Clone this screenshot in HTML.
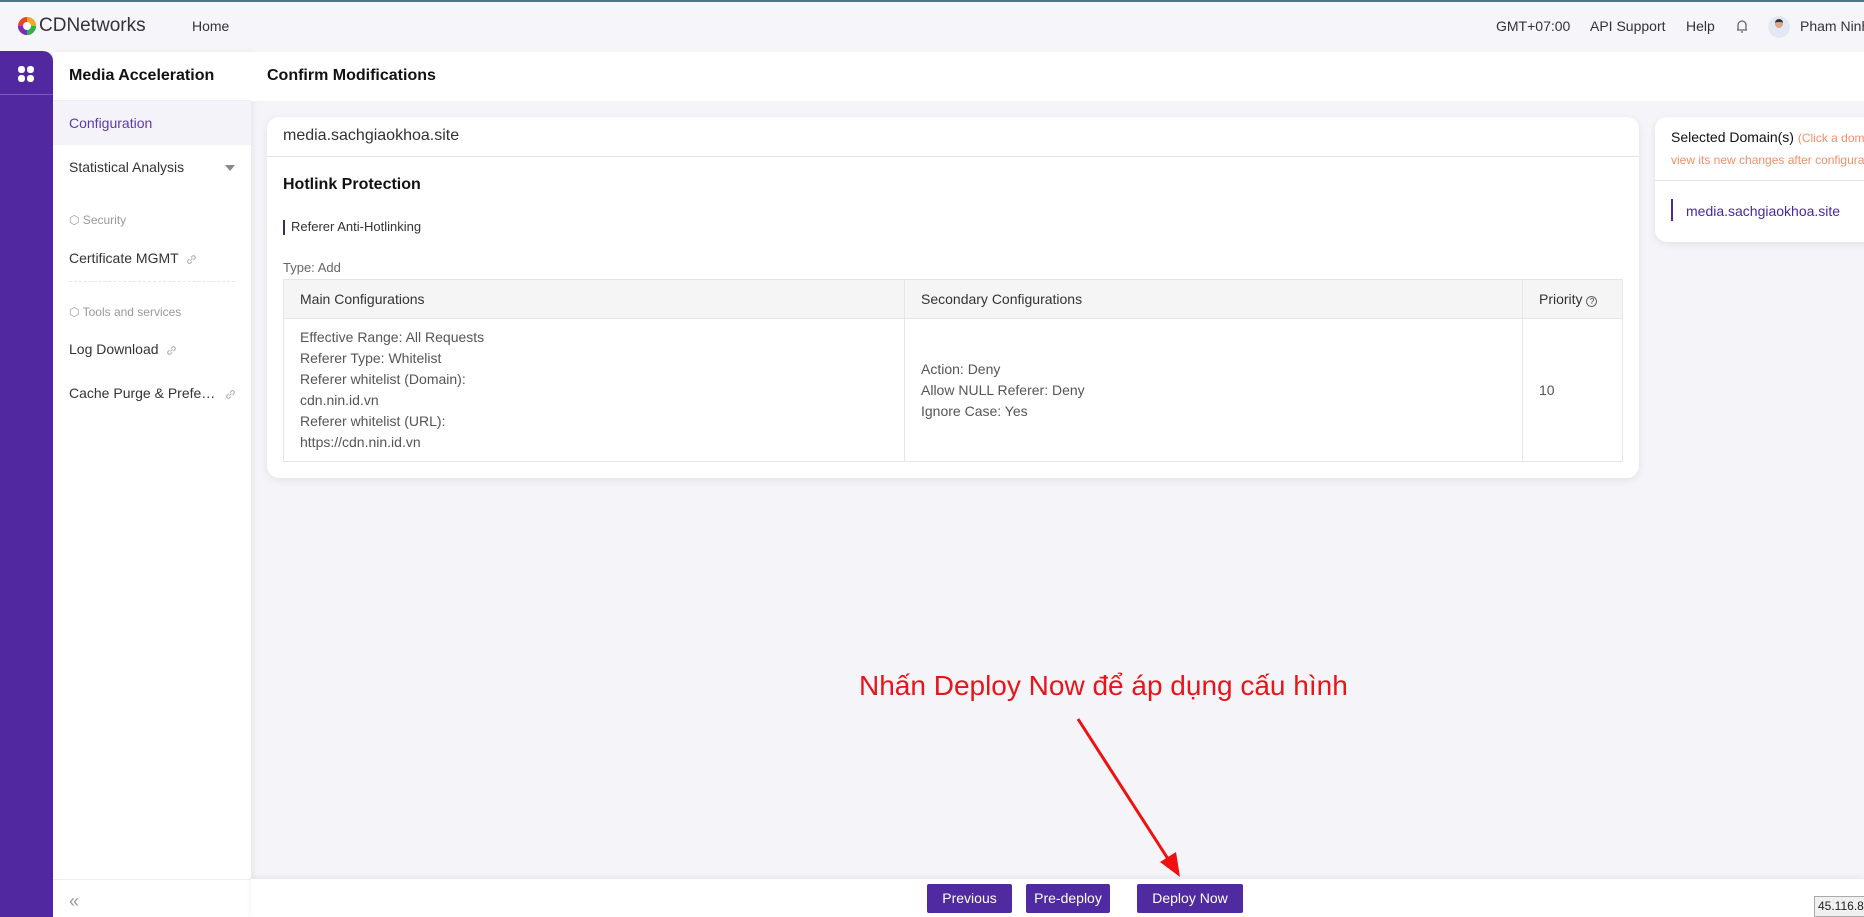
<!DOCTYPE html>
<html><head><meta charset="utf-8"><style>
*{margin:0;padding:0;box-sizing:border-box}
body{width:1864px;height:917px;overflow:hidden;background:#f5f5f9;font-family:"Liberation Sans",Arial,sans-serif;color:#333;position:relative;font-size:14px}
.abs{position:absolute;white-space:nowrap}
.hdr{left:0;top:0;width:1864px;height:52px;background:#f6f6fa;border-top:2px solid #4a7a86}
.pbar{left:0;top:51px;width:53px;height:866px;background:#5128a0;border-top-right-radius:10px}
.side{left:53px;top:52px;width:198px;height:865px;background:#fff;box-shadow:2px 0 6px rgba(0,0,0,.06)}
.mi{position:absolute;left:16px;font-size:14px;color:#333;white-space:nowrap}
.grp{position:absolute;left:16px;font-size:12px;color:#999;white-space:nowrap}
.tbar{left:251px;top:52px;width:1613px;height:49px;background:#fff}
.card{left:267px;top:117px;width:1372px;height:361px;background:#fff;border-radius:12px;box-shadow:0 2px 8px rgba(0,0,0,.08)}
.rcard{left:1655px;top:117px;width:230px;height:125px;background:#fff;border-radius:12px;box-shadow:0 2px 8px rgba(0,0,0,.08)}
table{border-collapse:collapse;position:absolute;left:16px;top:162px;width:1340px}
td,th{border:1px solid #e6e6e6;font-weight:normal;text-align:left;font-size:14px;color:#555;vertical-align:middle}
th{background:#f5f5f5;height:39px;padding-left:16px;color:#333}
td{height:143px;padding-left:16px;line-height:21px}
.btn{position:absolute;top:884px;height:29px;background:#4f2aa0;color:#fff;font-size:14px;text-align:center;line-height:29px;border-radius:2px}
.lk{display:inline-block;vertical-align:middle;margin-left:4px}
</style></head><body>
<div class="abs hdr">
 <svg class="abs" style="left:17px;top:14px" width="20" height="20" viewBox="0 0 20 20"><circle cx="10" cy="10" r="9" fill="#e8452c"/><path d="M10 1a9 9 0 0 1 9 9h-9z" fill="#f5a623"/><path d="M1 10a9 9 0 0 0 9 9v-9z" fill="#7b2cbf"/><path d="M10 19a9 9 0 0 0 9-9h-9z" fill="#2cb34a"/><circle cx="10" cy="10" r="4" fill="#fff"/></svg>
 <div class="abs" style="left:39px;top:13px;font-size:19px;color:#333">CDNetworks</div>
 <div class="abs" style="left:192px;top:16px">Home</div>
 <div class="abs" style="left:1496px;top:16px">GMT+07:00</div>
 <div class="abs" style="left:1590px;top:16px">API Support</div>
 <div class="abs" style="left:1686px;top:16px">Help</div>
 <svg class="abs" style="left:1735px;top:17px" width="14" height="15" viewBox="0 0 14 15"><path d="M3 11V6a4 4 0 0 1 8 0v5M2 11h10M6 13h2" stroke="#666" fill="none" stroke-width="1.3"/></svg>
 <div class="abs" style="left:1768px;top:14px;width:22px;height:22px;border-radius:50%;background:#e4e8f4"><div class="abs" style="left:7px;top:3px;width:8px;height:9px;border-radius:4px;background:#d9a88a;border-top:3px solid #333"></div></div>
 <div class="abs" style="left:1800px;top:16px">Pham Ninh</div>
</div>
<div class="abs pbar">
 <svg class="abs" style="left:17px;top:14px" width="18" height="18" viewBox="0 0 18 18" fill="#fff"><rect x="1" y="1" width="7" height="7" rx="3"/><rect x="10" y="1" width="7" height="7" rx="3"/><rect x="1" y="10" width="7" height="7" rx="3"/><rect x="10" y="10" width="7" height="7" rx="3"/></svg>
 <div class="abs" style="left:0;top:43px;width:53px;height:1px;background:#7a5cc0"></div>
</div>
<div class="abs side">
 <div class="abs" style="left:16px;top:15px;font-size:16px;font-weight:bold;color:#111">Media Acceleration</div>
 <div class="abs" style="left:0;top:48px;width:198px;height:1px;background:#eee"></div>
 <div class="abs" style="left:0;top:49px;width:198px;height:44px;background:#f4f3fa"></div>
 <div class="mi" style="top:63px;color:#5b3aa8">Configuration</div>
 <div class="mi" style="top:107px">Statistical Analysis</div>
 <div class="abs" style="left:172px;top:113px;border:5px solid transparent;border-top:6px solid #888"></div>
 <div class="grp" style="top:161px">⬡ Security</div>
 <div class="mi" style="top:198px">Certificate MGMT <svg class="lk" width="11" height="11" viewBox="0 0 11 11"><path d="M4.5 6.5l2-2M3.5 5L2 6.5a1.8 1.8 0 0 0 2.5 2.5L6 7.5M5 3.5L6.5 2a1.8 1.8 0 0 1 2.5 2.5L7.5 6" stroke="#aaa" fill="none"/></svg></div>
 <div class="abs" style="left:16px;top:229px;width:166px;border-top:1px dashed #e6e6e6"></div>
 <div class="grp" style="top:253px">⬡ Tools and services</div>
 <div class="mi" style="top:289px">Log Download <svg class="lk" width="11" height="11" viewBox="0 0 11 11"><path d="M4.5 6.5l2-2M3.5 5L2 6.5a1.8 1.8 0 0 0 2.5 2.5L6 7.5M5 3.5L6.5 2a1.8 1.8 0 0 1 2.5 2.5L7.5 6" stroke="#aaa" fill="none"/></svg></div>
 <div class="mi" style="top:333px">Cache Purge &amp; Prefe… <svg class="lk" style="margin-left:6px" width="11" height="11" viewBox="0 0 11 11"><path d="M4.5 6.5l2-2M3.5 5L2 6.5a1.8 1.8 0 0 0 2.5 2.5L6 7.5M5 3.5L6.5 2a1.8 1.8 0 0 1 2.5 2.5L7.5 6" stroke="#aaa" fill="none"/></svg></div>
 <div class="abs" style="left:0;top:827px;width:198px;height:1px;background:#eee"></div>
 <div class="abs" style="left:16px;top:839px;font-size:18px;color:#999">«</div>
</div>
<div class="abs tbar"><div class="abs" style="left:16px;top:15px;font-size:16px;font-weight:bold;color:#111">Confirm Modifications</div></div>
<div class="abs card">
 <div class="abs" style="left:16px;top:10px;font-size:16px;color:#333">media.sachgiaokhoa.site</div>
 <div class="abs" style="left:0;top:39px;width:1372px;height:1px;background:#e4e4e4"></div>
 <div class="abs" style="left:16px;top:59px;font-size:16px;font-weight:bold;color:#111">Hotlink Protection</div>
 <div class="abs" style="left:16px;top:103px;width:2px;height:15px;background:#3a2a6a"></div>
 <div class="abs" style="left:24px;top:102px;font-size:13px;color:#333">Referer Anti-Hotlinking</div>
 <div class="abs" style="left:16px;top:143px;font-size:13px;color:#666">Type: Add</div>
 <table><tr><th style="width:621px">Main Configurations</th><th style="width:618px">Secondary Configurations</th><th>Priority <span style="display:inline-block;width:11px;height:11px;border:1px solid #666;border-radius:50%;font-size:8px;line-height:9px;text-align:center">?</span></th></tr>
 <tr><td>Effective Range: All Requests<br>Referer Type: Whitelist<br>Referer whitelist (Domain):<br>cdn.nin.id.vn<br>Referer whitelist (URL):<br>https://cdn.nin.id.vn</td><td>Action: Deny<br>Allow NULL Referer: Deny<br>Ignore Case: Yes</td><td>10</td></tr></table>
</div>
<div class="abs rcard">
 <div class="abs" style="left:16px;top:12px;font-size:14px;color:#111">Selected Domain(s) <span style="font-size:12px;color:#f0906a">(Click a domain to</span></div>
 <div class="abs" style="left:16px;top:36px;font-size:12px;color:#f0906a">view its new changes after configuration)</div>
 <div class="abs" style="left:0;top:63px;width:230px;height:1px;background:#e4e4e4"></div>
 <div class="abs" style="left:16px;top:82px;width:2px;height:22px;background:#4a2a9a"></div>
 <div class="abs" style="left:31px;top:86px;font-size:14px;color:#4a2a9a">media.sachgiaokhoa.site</div>
</div>
<div class="abs" style="left:859px;top:670px;font-size:28px;color:#e8141a">Nhấn Deploy Now để áp dụng cấu hình</div>
<svg class="abs" style="left:0;top:0" width="1864" height="917"><line x1="1078" y1="719" x2="1170" y2="862" stroke="#f01010" stroke-width="3"/><polygon points="1180,877 1160,862 1176,852" fill="#f01010"/></svg>
<div class="abs" style="left:251px;top:879px;width:1613px;height:38px;background:#fff;box-shadow:0 -2px 6px rgba(0,0,0,.06)"></div>
<div class="btn" style="left:927px;width:85px">Previous</div>
<div class="btn" style="left:1026px;width:84px">Pre-deploy</div>
<div class="btn" style="left:1137px;width:106px">Deploy Now</div>
<div class="abs" style="left:1814px;top:896px;width:60px;height:21px;background:#f0f0f0;border:1px solid #aaa;font-size:12px;line-height:19px;padding-left:3px;color:#222">45.116.8</div>
</body></html>
